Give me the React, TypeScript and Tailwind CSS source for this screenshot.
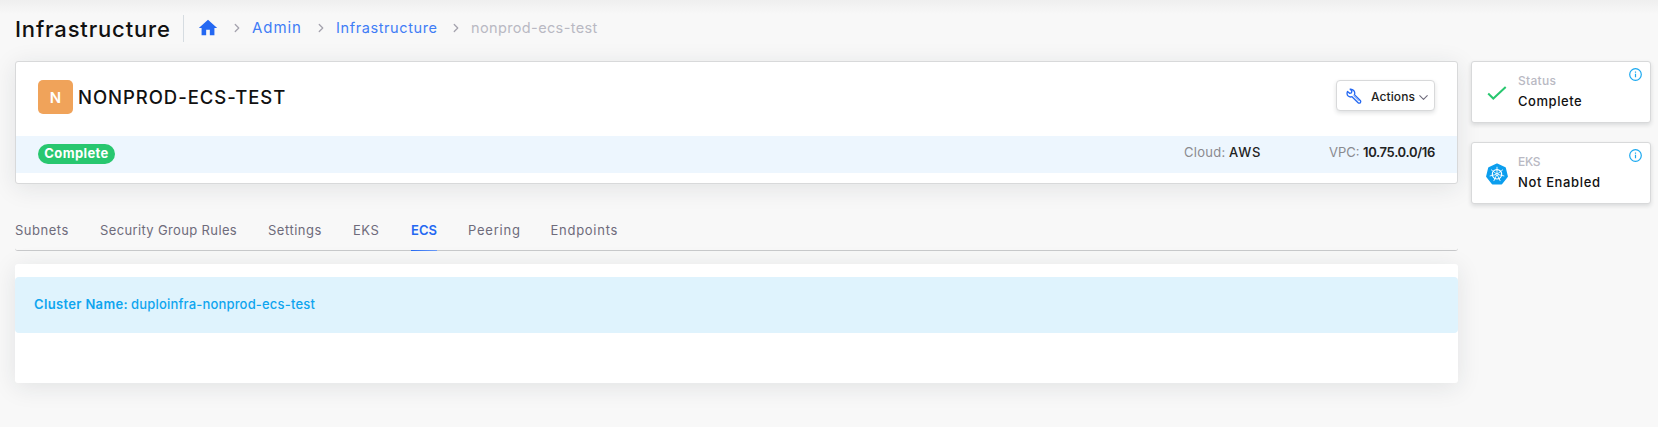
import type { ReactNode } from 'react';
import { MdHome } from 'react-icons/md';
import { ChevronDown, ChevronRight } from 'lucide-react';

const tabs = [
  { label: 'Subnets', cls: 'w-[85px] tracking-[0.52px]' },
  { label: 'Security Group Rules', cls: 'w-[168px] tracking-[0.36px]' },
  { label: 'Settings', cls: 'w-[85px] tracking-[0.52px]' },
  { label: 'EKS', cls: 'w-[58px] tracking-[0.54px]' },
  { label: 'ECS', cls: 'w-[57px] tracking-[0.05px]', active: true },
  { label: 'Peering', cls: 'w-[82.5px] tracking-[0.78px]' },
  { label: 'Endpoints', cls: 'w-[70px] tracking-[0.73px]' },
];

function InfoIcon() {
  return (
    <svg className="absolute right-[8px] top-[6px] size-[13px]" viewBox="0 0 13 13" fill="none" stroke="#1ba9f0">
      <circle cx="6.5" cy="6.5" r="5.8" strokeWidth="1.2" />
      <path d="M6.5 5.7v3.6M6.5 3.6v1.1" strokeWidth="1.2" />
    </svg>
  );
}

function WrenchIcon() {
  return (
    <svg className="size-[16px] shrink-0" viewBox="0 0 16 16" fill="none" stroke="#2468f2" strokeWidth="1.3" strokeLinejoin="round">
      <path d="M4.1 1.1 5.9 3 5.4 4.8 3.6 5.3 1.5 3.4C.8 5.1 1 7 2.2 8.1 3.3 9 4.700 9.200 6 8.700l6.100 6c.6.6 1.600.6 2.200 0s.6-1.600 0-2.200L8.400 6.600C9 5.200 8.800 3.700 7.700 2.500 6.700 1.400 5.500.9 4.100 1.100Z" />
      <path d="m7.300 7.400 5.500 5.700" strokeWidth=".6" />
    </svg>
  );
}

function CheckIcon() {
  return (
    <svg className="h-[14px] w-[20px]" viewBox="0 0 20 14" fill="none" stroke="#28c76f" strokeWidth="2">
      <path d="m1.200 7.500 5.100 5L18.700 1" />
    </svg>
  );
}

function KubernetesIcon() {
  return (
    <svg className="size-[22px]" viewBox="0 0 22 22">
      <path
        d="M11 1.300 19 5.100 21 13.500 15.500 20.500H6.500L1 13.500 3 5.100Z"
        fill="#0b9eee"
        stroke="#0b9eee"
        strokeWidth="1.800"
        strokeLinejoin="round"
      />
      <g fill="none" stroke="#fff" strokeLinecap="round">
        <circle cx="11" cy="11.300" r="4.700" strokeWidth="1.200" />
        <path
          d="M11 11.300V4.200M11 11.300 16.600 6.900M11 11.300 17.900 12.900M11 11.300 14.100 17.700M11 11.300 7.900 17.700M11 11.300 4.100 12.900M11 11.300 5.400 6.900"
          strokeWidth=".85"
        />
      </g>
      <circle cx="11" cy="11.300" r="1.300" fill="#fff" />
      <circle cx="11" cy="11.300" r=".6" fill="#0b9eee" />
    </svg>
  );
}

function Separator({ cls }: { cls: string }) {
  return (
    <span className={`flex shrink-0 justify-center ${cls}`}>
      <ChevronRight className="size-[14px] text-[#a5a3ae]" strokeWidth={2.2} />
    </span>
  );
}

function StatCard({ icon, label, value }: { icon: ReactNode; label: ReactNode; value: ReactNode }) {
  return (
    <div className="relative flex h-[62px] w-[180px] items-center rounded-[3px] border border-[#d8d9da] bg-white shadow-[0_2px_4px_rgba(34,41,47,0.14)]">
      <span className="flex w-[46px] items-center justify-center pl-[4px] pt-[1px]">{icon}</span>
      <div className="flex flex-col pb-[2px]">
        <span className="h-[20px] text-[12px] font-medium leading-[20px] text-[#b9b9c3]">{label}</span>
        <span className="h-[20px] text-[13px] font-medium leading-[20px] text-[#111]">{value}</span>
      </div>
      <InfoIcon />
    </div>
  );
}

export default function App() {
  return (
    <div className="h-[427px] w-[1658px] overflow-hidden bg-[#f8f8f8] font-['Inter',sans-serif] text-[13px]">
      <div className="h-[14px] bg-linear-to-b from-[#efefef] to-[#f8f8f8]" />
      <header className="flex h-[28px] items-center pl-[15px]">
        <h1 className="w-[168px] pt-[2px] text-[22px] font-medium leading-[28px] tracking-[0.84px] text-[#111]">Infrastructure</h1>
        <span className="h-[27px] w-px bg-[#d6dce1]" />
        <nav className="flex items-center text-[14.5px] text-[#3f7df6]">
          <MdHome className="ml-[13px] size-[22px] text-[#2468f2]" />
          <Separator cls="w-[33px] pl-[3px]" />
          <span className="w-[50px] whitespace-nowrap text-[15px] tracking-[0.95px]">Admin</span>
          <Separator cls="w-[34px] pl-[3px]" />
          <span className="w-[101px] whitespace-nowrap tracking-[0.6px]">Infrastructure</span>
          <Separator cls="w-[34px] pl-[3px]" />
          <span className="whitespace-nowrap tracking-[0.37px] text-[#b9b9c3]">nonprod-ecs-test</span>
        </nav>
      </header>

      <main className="flex gap-[13px] pl-[15px] pt-[19px]">
        <div className="w-[1443px]">
          <section className="h-[123px] rounded-[3px] border border-[#d8d9da] bg-white shadow-[0_4px_24px_rgba(34,41,47,0.1)]">
            <div className="flex h-[74px] items-start justify-between px-[22px] pt-[18px]">
              <div className="flex items-center">
                <span className="flex h-[34px] w-[35px] items-center justify-center rounded-[5px] bg-[#f0a35a] pt-[2px] text-[15px] font-semibold text-white">N</span>
                <h2 className="ml-[5px] text-[18.5px] font-medium leading-[28px] tracking-[0.94px] text-[#111]">NONPROD-ECS-TEST</h2>
              </div>
              <button className="flex h-[31px] w-[99px] items-center rounded-[4px] border border-[#d8d9da] bg-white pl-[9px] text-[12px] font-medium text-[#222] shadow-[0_2px_4px_rgba(34,41,47,0.14)]">
                <WrenchIcon />
                <span className="ml-[9px] pt-[2px] tracking-[0.1px]">Actions</span>
                <ChevronDown className="ml-px mt-[4px] size-[15px] shrink-0 text-[#6e6b7b]" strokeWidth={1.7} />
              </button>
            </div>
            <div className="flex h-[37px] items-center justify-between bg-[#edf6fe] px-[22px]">
              <span className="mt-[-1px] flex h-[20px] w-[77px] items-center justify-center rounded-full bg-[#28c76f] text-[13px] font-bold tracking-[0.4px] text-white">
                Complete
              </span>
              <div className="flex pb-[5px] leading-[20px]">
                <span className="w-[45px] tracking-[0.3px] text-[#8a8a8f]">Cloud:</span>
                <span className="w-[100px] font-medium tracking-[0.8px] text-[#222]">AWS</span>
                <span className="w-[34px] text-[#8a8a8f]">VPC:</span>
                <span className="w-[72px] whitespace-nowrap font-semibold tracking-[-0.33px] text-[#222]">10.75.0.0/16</span>
              </div>
            </div>
          </section>

          <nav className="mt-[26px] flex h-[41px] rounded-[3px] border-b border-[#c8c9cb] text-[#6e6b7b]">
            {tabs.map((t) => (
              <div key={t.label} className={`whitespace-nowrap leading-[41px] ${t.cls}`}>
                {t.active ? (
                  <div className="flex w-[26px] flex-col font-semibold text-[#2468f2]">
                    <span className="h-[40px]">{t.label}</span>
                    <span className="h-px bg-linear-to-r from-[#2468f2] to-[#6b9af7]" />
                  </div>
                ) : (
                  t.label
                )}
              </div>
            ))}
          </nav>

          <section className="mt-[13px] h-[119px] rounded-[3px] bg-white pt-[13px] shadow-[0_4px_24px_rgba(34,41,47,0.1)]">
            <div className="flex h-[56px] items-center rounded-[4px] bg-[#dff3fd] pl-[19px] text-[#0ea5ef]">
              <span className="w-[97px] whitespace-nowrap font-semibold tracking-[0.34px]">Cluster Name:</span>
              <span className="font-medium tracking-[0.18px]">duploinfra-nonprod-ecs-test</span>
            </div>
          </section>
        </div>

        <aside className="flex flex-col gap-[19px]">
          <StatCard
            icon={<CheckIcon />}
            label={<span className="tracking-[0.3px]">Status</span>}
            value={<span className="tracking-[0.55px]">Complete</span>}
          />
          <StatCard
            icon={<KubernetesIcon />}
            label={<span className="tracking-[-0.3px]">EKS</span>}
            value={<span className="tracking-[0.64px]">Not Enabled</span>}
          />
        </aside>
      </main>
    </div>
  );
}
